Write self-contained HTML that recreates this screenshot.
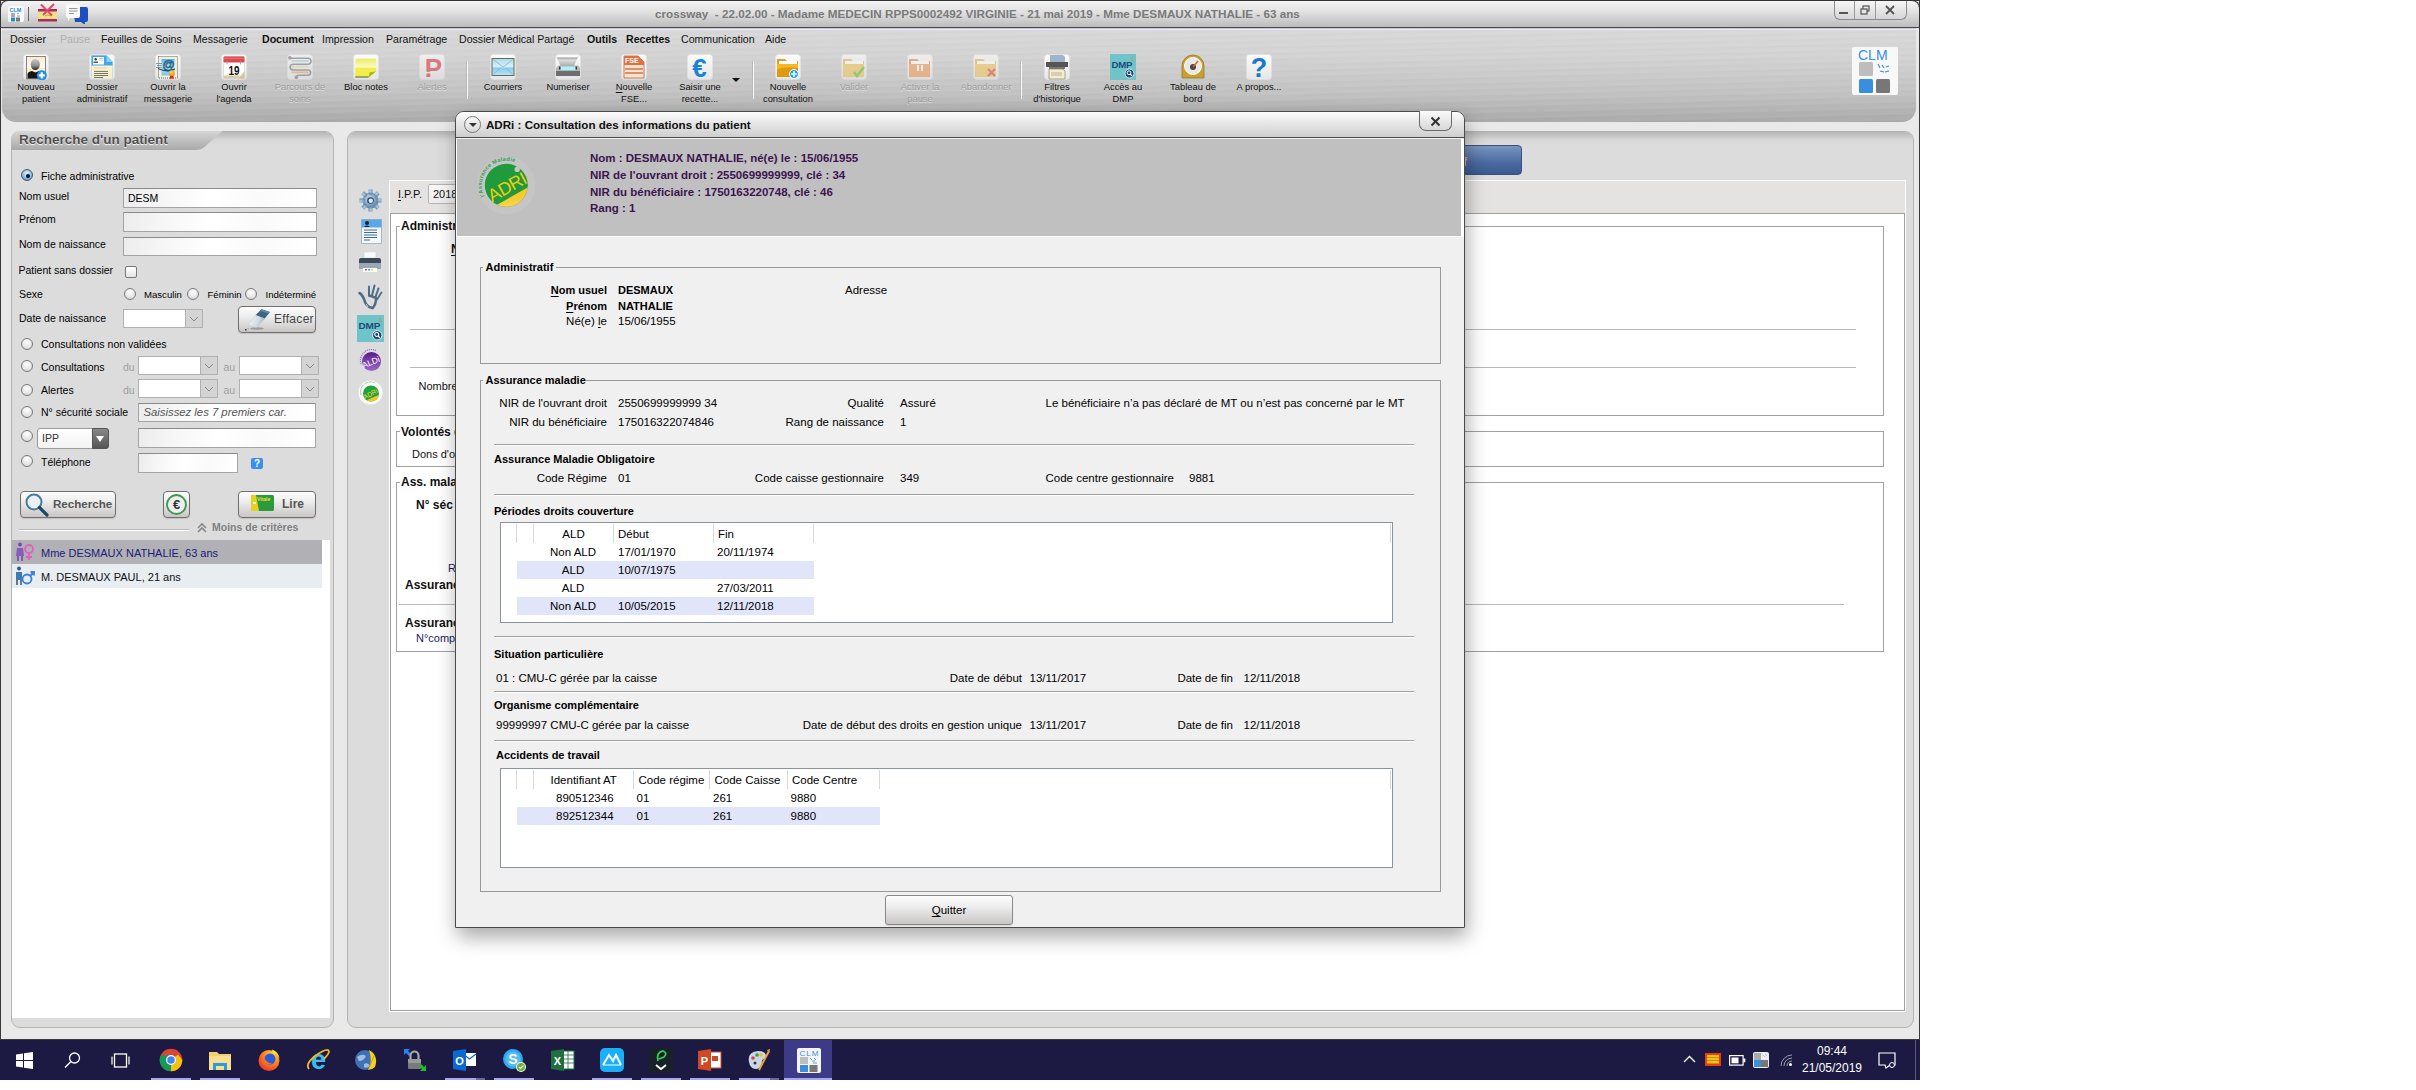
<!DOCTYPE html>
<html><head><meta charset="utf-8">
<style>
*{margin:0;padding:0;box-sizing:border-box}
html,body{width:2416px;height:1090px;overflow:hidden;background:#fff;font-family:"Liberation Sans",sans-serif;font-size:11px;color:#000}
.a{position:absolute}
u{text-underline-offset:2px;text-decoration-thickness:1px}
.t{position:absolute;white-space:nowrap;line-height:1}
#win{left:0;top:0;width:1920px;height:1040px;background:#e9e9e9;border-left:1px solid #3a3a3a;border-right:1px solid #3a3a3a;border-top:1px solid #333}
#title{left:0;top:0;width:1920px;height:28px;background:linear-gradient(#f4f4f4,#e2e2e2 40%,#bdbdbd);border-bottom:1px solid #404040;border-radius:8px 8px 0 0;border:1px solid #333;border-bottom:1px solid #484848}
#tb{left:2px;top:29px;width:1914px;height:93px;border-radius:0 0 14px 14px;
 background:repeating-linear-gradient(178.5deg,rgba(255,255,255,0.0) 0px,rgba(255,255,255,0.04) 2px,rgba(0,0,0,0.015) 4px,rgba(255,255,255,0) 6px),linear-gradient(#d9d9d9,#d3d3d3 30%,#c2c2c2 70%,#aaaaaa)}
.menu{top:34px;font-size:10.6px;color:#111}
.tbl{font-size:9.4px;color:#111;text-align:center;line-height:12px}
.dis{color:#9c9c9c;text-shadow:0 1px 0 rgba(255,255,255,0.5)}
.icd{opacity:0.68}
.panel{background:#dcdcdc;border:1px solid #b4b4b4;border-radius:9px 9px 9px 9px}
.rad{width:12px;height:12px;border-radius:50%;border:1px solid #7a7a7a;background:radial-gradient(circle at 50% 30%,#fff,#e0e0e0 70%,#c8c8c8)}
.rsel{background:radial-gradient(circle at 50% 35%,#e8f4ff,#7ab8f0 60%,#3a78c0);border-color:#555}
.inp{border:1px solid #a4a4a4;border-top-color:#8a8a8a;border-radius:1px;background:linear-gradient(100deg,#ececec 0%,#f6f6f6 20%,#fff 45%,#fafafa 70%,#fff 100%)}
.combo{border:1px solid #b0b0b0;background:#fff}
.cbtn{border:1px solid #b0b0b0;background:#d4d4d4}
.btn{border:1px solid #726e6e;border-radius:4px;background:linear-gradient(#fdfdfd,#ececec 40%,#c9c5c5);box-shadow:0 1px 1px rgba(0,0,0,0.12)}
#taskbar{left:0;top:1039px;width:1920px;height:41px;background:#1c1a42;border-top:1px solid #3a3a3a}
</style></head><body>
<svg width="0" height="0" style="position:absolute"><defs><linearGradient id="tile" x1="0" y1="0" x2="0" y2="1"><stop offset="0" stop-color="#fbfbfb"/><stop offset="1" stop-color="#e6e6e6"/></linearGradient></defs></svg>
<div id="win" class="a"></div>
<div id="title" class="a"></div>
<div class="t" style="left:655px;top:8px;font-size:11.7px;font-weight:bold;color:#7a7a7a">crossway&nbsp; - 22.02.00 - Madame MEDECIN RPPS0002492 VIRGINIE - 21 mai 2019 - Mme DESMAUX NATHALIE - 63 ans</div>
<div class="a" style="left:8px;top:6px;width:16px;height:16px;background:#f8f8f8;border-radius:2px"><svg width="16" height="16" viewBox="0 0 16 16"><text x="1.5" y="6" font-size="5.5" font-weight="bold" fill="#2a88d8" font-family="Liberation Sans">CLM</text><rect x="3" y="7" width="4" height="4" fill="#aaa"/><rect x="3" y="11.5" width="4" height="4" fill="#2a88d8"/><rect x="8" y="11.5" width="4" height="4" fill="#777"/><path d="M9 8l2 -1M9 10h3" stroke="#2a88d8" stroke-width="0.7"/></svg></div>
<div class="a" style="left:28px;top:7px;width:1px;height:14px;background:#666"></div>
<svg class="a" style="left:37px;top:3px" width="22" height="20" viewBox="0 0 22 20"><rect x="1" y="6" width="19" height="12" rx="1.5" fill="#f0e08a"/><rect x="1" y="6" width="19" height="2.5" fill="#b02858"/><rect x="1" y="16" width="19" height="2.5" fill="#b02858"/><path d="M8 13q3-2 6 0" stroke="#c8a840" stroke-width="1" fill="none"/><path d="M4 1.5l11 11M17 1l-11 11" stroke="#e04870" stroke-width="2"/></svg>
<svg class="a" style="left:65px;top:4px" width="24" height="20" viewBox="0 0 24 20"><path d="M8 3h13a2 2 0 0 1 2 2v11a2 2 0 0 1-2 2h-1v3l-4-3H10z" fill="#1e4ec0"/><path d="M1 2a2 2 0 0 1 2-2h10a2 2 0 0 1 2 2v10a2 2 0 0 1-2 2H5l-2 3v-3H3a2 2 0 0 1-2-2z" fill="#fafafa"/><path d="M4 4.5h8.5M4 7h8.5M4 9.5h5" stroke="#666" stroke-width="0.7"/></svg>
<div id="tb" class="a"></div>
<div class="a" style="left:1834px;top:1px;width:73px;height:19px;border:1px solid #8a8a8a;border-top:none;border-radius:0 0 6px 6px;background:linear-gradient(#f6f6f6,#d6d6d6)"></div>
<div class="a" style="left:1854px;top:1px;width:1px;height:18px;background:#9a9a9a"></div>
<div class="a" style="left:1875px;top:1px;width:1px;height:18px;background:#9a9a9a"></div>
<div class="a" style="left:1839px;top:12px;width:9px;height:2px;background:#555"></div>
<svg class="a" style="left:1860px;top:5px" width="10" height="10" viewBox="0 0 10 10"><rect x="3" y="1" width="6" height="5" fill="none" stroke="#555" stroke-width="1.2"/><rect x="1" y="4" width="6" height="5" fill="#e6e6e6" stroke="#555" stroke-width="1.2"/></svg>
<svg class="a" style="left:1885px;top:5px" width="10" height="10" viewBox="0 0 10 10"><path d="M1 1l8 8M9 1l-8 8" stroke="#555" stroke-width="1.8"/></svg>
<div class="a" style="left:1852px;top:47px;width:46px;height:48px;background:#f8f8f8;border-radius:2px"><svg width="46" height="48" viewBox="0 0 46 48"><text x="6" y="13" font-size="14" fill="#3a8ee0" font-family="Liberation Sans">CLM</text><rect x="7" y="15" width="14" height="14" rx="1.5" fill="#bdbdbd"/><rect x="7" y="32" width="14" height="14" rx="1.5" fill="#3a8ee0"/><rect x="24" y="32" width="14" height="14" rx="1.5" fill="#777"/><path d="M26 17l2 4M30 18l2 3M34 20l3 -1M28 24l4 1M33 25l4 -1" stroke="#3a8ee0" stroke-width="1.2"/></svg></div>
<div class="a" style="left:2px;top:28px;width:1914px;height:1px;background:#c6c6de"></div>
<div class="a" style="left:2px;top:29px;width:1914px;height:1px;background:#eaeaf0"></div>
<!--MENU-->
<div class="t menu" style="left:10px;">Dossier</div>
<div class="t menu" style="left:60px;color:#b0b0b0;">Pause</div>
<div class="t menu" style="left:101px;">Feuilles de Soins</div>
<div class="t menu" style="left:193px;">Messagerie</div>
<div class="t menu" style="left:262px;font-weight:bold;">Document</div>
<div class="t menu" style="left:322px;">Impression</div>
<div class="t menu" style="left:386px;">Paramétrage</div>
<div class="t menu" style="left:459px;">Dossier Médical Partagé</div>
<div class="t menu" style="left:587px;font-weight:bold;">Outils</div>
<div class="t menu" style="left:626px;font-weight:bold;">Recettes</div>
<div class="t menu" style="left:681px;">Communication</div>
<div class="t menu" style="left:765px;">Aide</div>
<!--TOOLBAR-->
<div class="a ico " style="left:23px;top:54px"><svg width="26" height="26" viewBox="0 0 26 26"><rect x="0.5" y="0.5" width="25" height="25" rx="3" fill="url(#tile)" stroke="#e0e0e0" stroke-width="0.6"/><defs><linearGradient id="npf" x1="0" y1="0" x2="0" y2="1"><stop offset="0" stop-color="#f8ecd0"/><stop offset="0.5" stop-color="#fffaf0"/><stop offset="0.5" stop-color="#f8ecc8"/><stop offset="1" stop-color="#f8f0d8"/></linearGradient><linearGradient id="nph" x1="0" y1="0" x2="0" y2="1"><stop offset="0" stop-color="#c8c8c8"/><stop offset="0.6" stop-color="#909090"/><stop offset="1" stop-color="#222"/></linearGradient></defs><rect x="3.4" y="2.4" width="19" height="22.5" fill="url(#npf)" stroke="#6a6a6a" stroke-width="0.8"/><ellipse cx="12.3" cy="10.5" rx="4.6" ry="5.6" fill="url(#nph)"/><path d="M4.5 24.5V20Q5 17.5 9 17L12.3 18.5L16 17Q19 18 19 21V24.5Z" fill="#151515"/><circle cx="18.8" cy="21.3" r="5" fill="#1a8ef0"/><path d="M18.8 18.2v6.2M15.7 21.3h6.2" stroke="#fff" stroke-width="2.2"/></svg></div>
<div class="a tbl" style="left:-4px;top:81px;width:80px">Nouveau<br>patient</div>
<div class="a ico " style="left:89px;top:54px"><svg width="26" height="26" viewBox="0 0 26 26"><rect x="0.5" y="0.5" width="25" height="25" rx="3" fill="url(#tile)" stroke="#e0e0e0" stroke-width="0.6"/><path d="M2.5 1.5h15l6 6.5v17h-21z" fill="#fbf0cc" stroke="#bcd" stroke-width="0.6"/><path d="M2.5 1.5h15l6 6.5v3.5h-21z" fill="#3aa8ec"/><path d="M17.5 1.5l6 6.5h-6z" fill="#8fd0f4"/><rect x="4" y="3" width="11" height="7.5" fill="#fff"/><circle cx="6.7" cy="5.3" r="1.2" fill="#333"/><rect x="4.5" y="7.5" width="4.5" height="1.5" fill="#555"/><path d="M10 4.5h4M10 6h4" stroke="#888" stroke-width="0.5"/><path d="M5 14h13" stroke="#bbb" stroke-width="0.5"/><path d="M5 17.4h14M5 19.5h14M5 21.5h14M5 23.5h9" stroke="#3a3a3a" stroke-width="0.7"/></svg></div>
<div class="a tbl" style="left:62px;top:81px;width:80px">Dossier<br>administratif</div>
<div class="a ico " style="left:155px;top:54px"><svg width="26" height="26" viewBox="0 0 26 26"><rect x="0.5" y="0.5" width="25" height="25" rx="3" fill="url(#tile)" stroke="#e0e0e0" stroke-width="0.6"/><defs><linearGradient id="omg" x1="0" y1="0" x2="0" y2="1"><stop offset="0" stop-color="#48b8f0"/><stop offset="0.45" stop-color="#b8e8fa"/><stop offset="0.55" stop-color="#98d8f4"/><stop offset="1" stop-color="#78c8f0"/></linearGradient><radialGradient id="medg" cx="0.4" cy="0.3" r="0.7"><stop offset="0" stop-color="#ffd060"/><stop offset="1" stop-color="#f09010"/></radialGradient></defs><rect x="3.5" y="2.5" width="19" height="21.5" fill="#f6eed4" stroke="#555" stroke-width="0.9" stroke-dasharray="1 1"/><rect x="6.5" y="5" width="13" height="16.5" fill="url(#omg)"/><text x="13.5" y="14.5" font-size="12" fill="none" stroke="#2a5a80" stroke-width="0.7" text-anchor="middle" font-family="Liberation Sans">@</text><path d="M1 9.5h6M2 11.5h5M1 13.5h6" stroke="#5a8aaa" stroke-width="0.8"/><path d="M3 14.5 Q12 19 20 15" stroke="#1a4a6a" stroke-width="1.3" fill="none"/><path d="M15 20.5h3.5v5l-1.75-1.5-1.75 1.5z" fill="#e82020"/><circle cx="16.8" cy="19.2" r="2.9" fill="url(#medg)"/></svg></div>
<div class="a tbl" style="left:128px;top:81px;width:80px">Ouvrir la<br>messagerie</div>
<div class="a ico " style="left:221px;top:54px"><svg width="26" height="26" viewBox="0 0 26 26"><rect x="0.5" y="0.5" width="25" height="25" rx="3" fill="url(#tile)" stroke="#e0e0e0" stroke-width="0.6"/><defs><linearGradient id="agr" x1="0" y1="0" x2="0" y2="1"><stop offset="0" stop-color="#c83848"/><stop offset="0.3" stop-color="#f07060"/><stop offset="0.5" stop-color="#e04a50"/><stop offset="1" stop-color="#d84450"/></linearGradient></defs><rect x="2.5" y="2.5" width="21" height="22" rx="1.2" fill="#fff" stroke="#c8c8c8" stroke-width="0.5"/><path d="M2.5 21.5h21v1.8a1.2 1.2 0 0 1-1.2 1.2H3.7a1.2 1.2 0 0 1-1.2-1.2z" fill="#d8cca0"/><rect x="2.5" y="2.5" width="21" height="6" rx="1" fill="url(#agr)"/><path d="M6 6.5v4M19.5 6.5v4" stroke="#999" stroke-width="0.8"/><text x="13" y="20.5" font-size="12.5" font-weight="bold" text-anchor="middle" fill="#111" font-family="Liberation Sans" textLength="11" lengthAdjust="spacingAndGlyphs">19</text><path d="M16.5 24.5 L23.5 17 V24.5Z" fill="#d0c498"/><path d="M16.5 24.5 Q19 20 23.5 17 Q21 22 16.5 24.5z" fill="#f4f0e4"/></svg></div>
<div class="a tbl" style="left:194px;top:81px;width:80px">Ouvrir<br>l'agenda</div>
<div class="a ico icd" style="left:287px;top:54px"><svg width="26" height="26" viewBox="0 0 26 26"><rect x="0.5" y="0.5" width="25" height="25" rx="3" fill="url(#tile)" stroke="#e0e0e0" stroke-width="0.6"/><rect x="4.5" y="6" width="17" height="1.8" fill="#b4d6ea"/><rect x="4.5" y="11.8" width="17" height="1.8" fill="#dfe4b0"/><rect x="4.5" y="17.4" width="17" height="1.8" fill="#f0b070"/><path d="M3 4.2H21A3 3 0 0 1 21 10.2H6A2.9 2.9 0 0 0 6 16H21A2.6 2.6 0 0 1 21 21.2H11.5A2 2 0 0 0 9.5 23.2" fill="none" stroke="#858b94" stroke-width="1.6"/><circle cx="2.9" cy="3.9" r="1.8" fill="#858b94"/><circle cx="9.3" cy="23.4" r="1.8" fill="#858b94"/></svg></div>
<div class="a tbl dis" style="left:260px;top:81px;width:80px">Parcours de<br>soins</div>
<div class="a ico " style="left:353px;top:54px"><svg width="26" height="26" viewBox="0 0 26 26"><rect x="0.5" y="0.5" width="25" height="25" rx="3" fill="url(#tile)" stroke="#e0e0e0" stroke-width="0.6"/><defs><linearGradient id="bng" x1="0" y1="0" x2="0" y2="1"><stop offset="0" stop-color="#ecec60"/><stop offset="0.45" stop-color="#fbfbc8"/><stop offset="0.5" stop-color="#f0ec50"/><stop offset="1" stop-color="#f4f040"/></linearGradient></defs><path d="M2.6 4.8H23V17.6L15.6 23.4H2.2Z" fill="url(#bng)"/><path d="M2.2 23.4H15.6L15.8 22.6H2.4Z" fill="#4a5a70"/><path d="M23 17.6L15.6 23.4L16.6 18.2Z" fill="#a8b818"/></svg></div>
<div class="a tbl" style="left:326px;top:81px;width:80px">Bloc notes</div>
<div class="a ico icd" style="left:419px;top:54px"><svg width="26" height="26" viewBox="0 0 26 26"><rect x="0.5" y="0.5" width="25" height="25" rx="3" fill="url(#tile)" stroke="#e0e0e0" stroke-width="0.6"/><text x="14.5" y="22.8" font-size="26" font-weight="bold" text-anchor="middle" fill="#e05058" font-family="Liberation Sans">P</text><rect x="7" y="17.8" width="6" height="1.6" fill="#f2f2f2"/></svg></div>
<div class="a tbl dis" style="left:392px;top:81px;width:80px">Alertes</div>
<div class="a ico " style="left:490px;top:54px"><svg width="26" height="26" viewBox="0 0 26 26"><rect x="0.5" y="0.5" width="25" height="25" rx="3" fill="url(#tile)" stroke="#e0e0e0" stroke-width="0.6"/><defs><linearGradient id="envg" x1="0" y1="0" x2="0" y2="1"><stop offset="0" stop-color="#a8dcf4"/><stop offset="0.5" stop-color="#d8f0fa"/><stop offset="0.55" stop-color="#88ccee"/><stop offset="1" stop-color="#b8e4f8"/></linearGradient></defs><rect x="2" y="4.5" width="22" height="17" fill="url(#envg)" stroke="#6a6a50" stroke-width="1"/><path d="M2.5 5l10.5 8 10.5-8" fill="none" stroke="#8aa0a0" stroke-width="0.6"/><path d="M2.5 21l8-7M23.5 21l-8-7" stroke="#7aa8c0" stroke-width="0.6"/></svg></div>
<div class="a tbl" style="left:463px;top:81px;width:80px">Courriers</div>
<div class="a ico " style="left:555px;top:54px"><svg width="26" height="26" viewBox="0 0 26 26"><rect x="0.5" y="0.5" width="25" height="25" rx="3" fill="url(#tile)" stroke="#e0e0e0" stroke-width="0.6"/><defs><linearGradient id="scl" x1="0" y1="0" x2="0" y2="1"><stop offset="0" stop-color="#999"/><stop offset="0.3" stop-color="#ddd"/><stop offset="1" stop-color="#aaa"/></linearGradient></defs><path d="M1.5 3.5h21.5l-1 1.5-3 7H5.5l-3-7z" fill="url(#scl)"/><path d="M1 14l2.5-2.5h19.5l2 2.5v3H1z" fill="#b4b4b4"/><path d="M4.5 12.5h17l-1 3.5h-15z" fill="#aef0fc"/><rect x="4" y="12.5" width="1.5" height="3" fill="#333"/><rect x="20.5" y="12.5" width="1.5" height="3" fill="#333"/><rect x="1" y="17" width="24" height="5" fill="#6e6e6e"/></svg></div>
<div class="a tbl" style="left:528px;top:81px;width:80px">Numeriser</div>
<div class="a ico " style="left:621px;top:54px"><svg width="26" height="26" viewBox="0 0 26 26"><rect x="0.5" y="0.5" width="25" height="25" rx="3" fill="url(#tile)" stroke="#e0e0e0" stroke-width="0.6"/><path d="M3 2h14l6 6v16H3z" fill="#f8e4d4" stroke="#c06030" stroke-width="0.8"/><path d="M3 2h14l6 6v3H3z" fill="#e07040"/><text x="4" y="9" font-size="7" font-weight="bold" fill="#fff" font-family="Liberation Sans">FSE</text><path d="M4 15h18M4 19h18" stroke="#e07040" stroke-width="1.6"/></svg></div>
<div class="a tbl" style="left:594px;top:81px;width:80px"><u>N</u>ouvelle<br>FSE...</div>
<div class="a ico " style="left:687px;top:54px"><svg width="26" height="26" viewBox="0 0 26 26"><rect x="0.5" y="0.5" width="25" height="25" rx="3" fill="url(#tile)" stroke="#e0e0e0" stroke-width="0.6"/><text x="12.5" y="22.5" font-size="26" font-weight="bold" text-anchor="middle" fill="#1a84d4" font-family="Liberation Sans">€</text></svg></div>
<div class="a tbl" style="left:660px;top:81px;width:80px">Saisir une<br>recette...</div>
<div class="a ico " style="left:775px;top:54px"><svg width="26" height="26" viewBox="0 0 26 26"><rect x="0.5" y="0.5" width="25" height="25" rx="3" fill="url(#tile)" stroke="#e0e0e0" stroke-width="0.6"/><path d="M2 5h8l2 2h11v16H2z" fill="#e0a020"/><rect x="4" y="7" width="18" height="5" fill="#fff"/><path d="M2 10h21v13H2z" fill="#f4b820"/><path d="M2 15 Q12 12 23 14 V23H2z" fill="#e09a10"/><circle cx="19" cy="20" r="4.5" fill="#20a8f0" stroke="#fff" stroke-width="1"/><path d="M19 17.2v5.6M16.2 20h5.6" stroke="#fff" stroke-width="1.6"/></svg></div>
<div class="a tbl" style="left:748px;top:81px;width:80px">Nouvelle<br>consultation</div>
<div class="a ico icd" style="left:841px;top:54px"><svg width="26" height="26" viewBox="0 0 26 26"><rect x="0.5" y="0.5" width="25" height="25" rx="3" fill="url(#tile)" stroke="#e0e0e0" stroke-width="0.6"/><path d="M2 5h8l2 2h11v16H2z" fill="#e8c070"/><rect x="4" y="7" width="18" height="5" fill="#fff"/><path d="M2 10h21v13H2z" fill="#f0cc70"/><path d="M13 18l3 4 7-9" stroke="#70c850" stroke-width="2.5" fill="none"/></svg></div>
<div class="a tbl dis" style="left:814px;top:81px;width:80px">Valider</div>
<div class="a ico icd" style="left:907px;top:54px"><svg width="26" height="26" viewBox="0 0 26 26"><rect x="0.5" y="0.5" width="25" height="25" rx="3" fill="url(#tile)" stroke="#e0e0e0" stroke-width="0.6"/><path d="M2 5h8l2 2h11v16H2z" fill="#e89860"/><rect x="4" y="7" width="18" height="5" fill="#fff"/><path d="M2 10h21v13H2z" fill="#f0a870"/><rect x="10" y="11" width="2" height="6" fill="#fff"/><rect x="14" y="11" width="2" height="6" fill="#fff"/></svg></div>
<div class="a tbl dis" style="left:880px;top:81px;width:80px">Activer la<br>pause</div>
<div class="a ico icd" style="left:973px;top:54px"><svg width="26" height="26" viewBox="0 0 26 26"><rect x="0.5" y="0.5" width="25" height="25" rx="3" fill="url(#tile)" stroke="#e0e0e0" stroke-width="0.6"/><path d="M2 5h8l2 2h11v16H2z" fill="#e8c070"/><rect x="4" y="7" width="18" height="5" fill="#fff"/><path d="M2 10h21v13H2z" fill="#f0cc70"/><path d="M15 15l7 7M22 15l-7 7" stroke="#e06060" stroke-width="2.2"/></svg></div>
<div class="a tbl dis" style="left:946px;top:81px;width:80px">Abandonner</div>
<div class="a ico " style="left:1044px;top:54px"><svg width="26" height="26" viewBox="0 0 26 26"><rect x="0.5" y="0.5" width="25" height="25" rx="3" fill="url(#tile)" stroke="#e0e0e0" stroke-width="0.6"/><path d="M6 1h13l2 2v5H6z" fill="#a0b4cc"/><path d="M2 8h22v5H2z" fill="#555"/><rect x="5" y="13" width="16" height="2" fill="#777"/><path d="M5 15h14l2 2v8H5z" fill="#f6ecc8" stroke="#777" stroke-width="0.6"/><path d="M7 19h11M7 21h11" stroke="#999" stroke-width="0.7"/></svg></div>
<div class="a tbl" style="left:1017px;top:81px;width:80px">Filtres<br>d'historique</div>
<div class="a ico " style="left:1110px;top:54px"><svg width="26" height="26" viewBox="0 0 26 26"><rect x="0" y="0" width="26" height="26" fill="#6ec4c8"/><text x="1.5" y="13.5" font-size="9.6" font-weight="bold" fill="#1e4a7a" font-family="Liberation Sans" textLength="21">DMP</text><path d="M21 5l2 -2M21 6h3" stroke="#e08030" stroke-width="0.8"/><circle cx="19.5" cy="19.5" r="4.5" fill="#1e4a7a" stroke="#fff" stroke-width="0.8"/><circle cx="19" cy="18.8" r="1.9" fill="none" stroke="#fff" stroke-width="1"/><path d="M20.3 20.2l1.8 1.8" stroke="#fff" stroke-width="1.2"/></svg></div>
<div class="a tbl" style="left:1083px;top:81px;width:80px">Accès au<br>DMP</div>
<div class="a ico " style="left:1180px;top:54px"><svg width="26" height="26" viewBox="0 0 26 26"><path d="M2 24 V12 A11 11 0 0 1 24 12 V24Z" fill="#c8a030" stroke="#9a7a20" stroke-width="0.8"/><circle cx="13" cy="12" r="8.5" fill="#e8e8e8" stroke="#fff" stroke-width="1"/><circle cx="13" cy="13" r="3" fill="#444"/><path d="M13 13l5-6" stroke="#e06020" stroke-width="1.5"/></svg></div>
<div class="a tbl" style="left:1153px;top:81px;width:80px">Tableau de<br>bord</div>
<div class="a ico " style="left:1246px;top:54px"><svg width="26" height="26" viewBox="0 0 26 26"><rect x="0.5" y="0.5" width="25" height="25" rx="3" fill="url(#tile)" stroke="#e0e0e0" stroke-width="0.6"/><text x="13" y="23" font-size="27" font-weight="bold" text-anchor="middle" fill="#1a78c8" font-family="Liberation Sans">?</text></svg></div>
<div class="a tbl" style="left:1219px;top:81px;width:80px">A propos...</div>
<div class="a" style="left:466px;top:61px;width:2px;height:38px;background:linear-gradient(90deg,#b8b8b8 50%,#fafafa 50%)"></div>
<div class="a" style="left:752px;top:61px;width:2px;height:38px;background:linear-gradient(90deg,#b8b8b8 50%,#fafafa 50%)"></div>
<div class="a" style="left:1020px;top:61px;width:2px;height:38px;background:linear-gradient(90deg,#b8b8b8 50%,#fafafa 50%)"></div>
<div class="a" style="left:732px;top:78px;width:0;height:0;border-left:4px solid transparent;border-right:4px solid transparent;border-top:4px solid #111"></div>
<!--/TOOLBAR-->

<!-- panels -->
<div class="a panel" style="left:11px;top:131px;width:323px;height:897px"></div>
<!--LEFT-->
<div class="a" style="left:12px;top:132px;width:321px;height:12px;border-radius:8px 8px 0 0;background:linear-gradient(#b6b6b6,#d4d4d4 60%,#dcdcdc)"></div>
<svg class="a" style="left:11px;top:131px" width="220" height="20" viewBox="0 0 220 20"><defs><linearGradient id="hg" x1="0" y1="0" x2="0" y2="1"><stop offset="0" stop-color="#d6d6d6"/><stop offset="1" stop-color="#a9a9a9"/></linearGradient></defs><path d="M0 9 Q0 0 9 0 H211.5 L194 15.5 Q190 19 185 19 H0Z" fill="url(#hg)"/></svg>
<div class="t" style="left:19px;top:133px;font-size:13.5px;font-weight:bold;color:#505050;text-shadow:0 1px 1px #fff">Recherche d'un patient</div>
<div class="a rad rsel" style="left:21px;top:169px"><div class="a" style="left:3.5px;top:3.5px;width:4px;height:4px;border-radius:50%;background:#111"></div></div>
<div class="t" style="left:41px;top:171px;font-size:10.5px;">Fiche administrative</div>
<div class="t" style="left:19px;top:191px;font-size:10.5px;">Nom usuel</div>
<div class="a inp" style="left:123px;top:188px;width:194px;height:20px"></div>
<div class="t" style="left:128px;top:193px;font-size:10.5px;">DESM</div>
<div class="t" style="left:19px;top:214px;font-size:10.5px;">Prénom</div>
<div class="a inp" style="left:123px;top:212px;width:194px;height:20px"></div>
<div class="t" style="left:19px;top:239px;font-size:10.5px;">Nom de naissance</div>
<div class="a inp" style="left:123px;top:237px;width:194px;height:19px"></div>
<div class="t" style="left:18.5px;top:265px;font-size:10.5px;">Patient sans dossier</div>
<div class="a" style="left:125px;top:266px;width:12px;height:12px;border:1px solid #777;border-radius:2px;background:linear-gradient(#fff,#e4e4e4)"></div>
<div class="t" style="left:19px;top:289px;font-size:10.5px;">Sexe</div>
<div class="a rad" style="left:124px;top:288px"></div>
<div class="t" style="left:144px;top:290px;font-size:9.6px;">Masculin</div>
<div class="a rad" style="left:187px;top:288px"></div>
<div class="t" style="left:207.5px;top:290px;font-size:9.6px;">Féminin</div>
<div class="a rad" style="left:245px;top:288px"></div>
<div class="t" style="left:265.5px;top:290px;font-size:9.6px;">Indéterminé</div>
<div class="t" style="left:19px;top:313px;font-size:10.5px;">Date de naissance</div>
<div class="a combo" style="left:123px;top:309px;width:80px;height:19px"></div><div class="a cbtn" style="left:185px;top:309px;width:18px;height:19px"></div><svg class="a" style="left:189.0px;top:315.5px" width="10" height="6" viewBox="0 0 10 6"><path d="M1 1l4 4 4-4" stroke="#888" stroke-width="1" fill="none"/></svg>
<div class="a btn" style="left:238px;top:306px;width:78px;height:27px"></div>
<svg class="a" style="left:245px;top:308px" width="28" height="24" viewBox="0 0 28 24"><defs><linearGradient id="erg" x1="0" y1="0" x2="1" y2="0.3"><stop offset="0" stop-color="#f4f8fa"/><stop offset="0.7" stop-color="#d0dce4"/><stop offset="1" stop-color="#a8b4bc"/></linearGradient></defs><ellipse cx="12" cy="20.5" rx="7" ry="1.2" fill="#777" opacity="0.6"/><path d="M3.2 16.8 L10.7 6.9 L19.8 10.6 L11.5 19.7Z" fill="url(#erg)" stroke="#c0c8cc" stroke-width="0.4" stroke-linejoin="round"/><path d="M10.7 6.9 L16.5 1.3 L25 4 L19.8 10.6Z" fill="#3c6688" stroke-linejoin="round"/><path d="M16.5 1.3 L25 4 L23.5 5.6 L15 3Z" fill="#5a8ab0"/><rect x="0" y="21" width="1.5" height="1.5" fill="#333"/><rect x="2.5" y="20" width="1.2" height="1.2" fill="#9ab"/></svg>
<div class="t" style="left:274px;top:313px;font-size:12px;color:#444;letter-spacing:0.3px">Effacer</div>
<div class="a rad" style="left:21px;top:337.5px"></div>
<div class="t" style="left:41px;top:339px;font-size:10.5px;">Consultations non validées</div>
<div class="a rad" style="left:21px;top:360px"></div>
<div class="t" style="left:41px;top:362px;font-size:10.5px;">Consultations</div>
<div class="t" style="left:123px;top:362px;font-size:10.5px;color:#a0a0a0">du</div>
<div class="a combo" style="left:138px;top:356px;width:80px;height:19px"></div><div class="a cbtn" style="left:200px;top:356px;width:18px;height:19px"></div><svg class="a" style="left:204.0px;top:362.5px" width="10" height="6" viewBox="0 0 10 6"><path d="M1 1l4 4 4-4" stroke="#888" stroke-width="1" fill="none"/></svg>
<div class="t" style="left:223.5px;top:362px;font-size:10.5px;color:#a0a0a0">au</div>
<div class="a combo" style="left:239px;top:356px;width:80px;height:19px"></div><div class="a cbtn" style="left:301px;top:356px;width:18px;height:19px"></div><svg class="a" style="left:305.0px;top:362.5px" width="10" height="6" viewBox="0 0 10 6"><path d="M1 1l4 4 4-4" stroke="#888" stroke-width="1" fill="none"/></svg>
<div class="a rad" style="left:21px;top:383.5px"></div>
<div class="t" style="left:41px;top:385px;font-size:10.5px;">Alertes</div>
<div class="t" style="left:123px;top:385px;font-size:10.5px;color:#a0a0a0">du</div>
<div class="a combo" style="left:138px;top:379px;width:80px;height:19px"></div><div class="a cbtn" style="left:200px;top:379px;width:18px;height:19px"></div><svg class="a" style="left:204.0px;top:385.5px" width="10" height="6" viewBox="0 0 10 6"><path d="M1 1l4 4 4-4" stroke="#888" stroke-width="1" fill="none"/></svg>
<div class="t" style="left:223.5px;top:385px;font-size:10.5px;color:#a0a0a0">au</div>
<div class="a combo" style="left:239px;top:379px;width:80px;height:19px"></div><div class="a cbtn" style="left:301px;top:379px;width:18px;height:19px"></div><svg class="a" style="left:305.0px;top:385.5px" width="10" height="6" viewBox="0 0 10 6"><path d="M1 1l4 4 4-4" stroke="#888" stroke-width="1" fill="none"/></svg>
<div class="a rad" style="left:21px;top:405.5px"></div>
<div class="t" style="left:41px;top:407px;font-size:10.5px;">N° sécurité sociale</div>
<div class="a inp" style="left:138px;top:403px;width:178px;height:19px"></div>
<div class="t" style="left:143.5px;top:407px;font-size:11.3px;font-style:italic;color:#555">Saisissez les 7 premiers car.</div>
<div class="a rad" style="left:21px;top:430px"></div>
<div class="a" style="left:37px;top:428px;width:72px;height:21px;border:1px solid #9a9a9a;border-radius:3px;background:linear-gradient(#fff,#f2f2f2)"></div>
<div class="a" style="left:92px;top:428px;width:17px;height:21px;border-radius:0 3px 3px 0;background:linear-gradient(#888,#555);border:1px solid #555"></div>
<div class="a" style="left:96px;top:436px;width:0;height:0;border-left:4.5px solid transparent;border-right:4.5px solid transparent;border-top:6px solid #fff"></div>
<div class="t" style="left:42px;top:433px;font-size:10.5px;color:#333">IPP</div>
<div class="a inp" style="left:138px;top:428px;width:178px;height:20px"></div>
<div class="a rad" style="left:21px;top:455px"></div>
<div class="t" style="left:41px;top:457px;font-size:10.5px;">Téléphone</div>
<div class="a inp" style="left:138px;top:453px;width:100px;height:20px"></div>
<div class="a" style="left:251px;top:458px;width:12px;height:11px;background:#3a90e8;border-radius:2px;color:#fff;font-size:10px;font-weight:bold;text-align:center;line-height:11px">?</div>
<div class="a btn" style="left:20px;top:491px;width:96px;height:27px"></div>
<svg class="a" style="left:24px;top:492px" width="26" height="25" viewBox="0 0 26 25"><circle cx="10" cy="10" r="7.5" fill="#e8f0f4" stroke="#4a7a9a" stroke-width="2"/><path d="M15.5 15.5 L23 23" stroke="#1e4a6a" stroke-width="3.2" stroke-linecap="round"/></svg>
<div class="t" style="left:53px;top:498px;font-size:11.6px;font-weight:bold;color:#555">Recherche</div>
<div class="a btn" style="left:163px;top:491px;width:27px;height:27px"></div>
<svg class="a" style="left:165px;top:493px" width="23" height="23" viewBox="0 0 23 23"><circle cx="11.5" cy="11.5" r="9.5" fill="#eee" stroke="#3a9a4a" stroke-width="1.8"/><text x="11.5" y="16" font-size="13" font-weight="bold" text-anchor="middle" fill="#333" font-family="Liberation Sans">€</text></svg>
<div class="a btn" style="left:238px;top:491px;width:78px;height:27px"></div>
<svg class="a" style="left:251px;top:495px" width="23" height="16" viewBox="0 0 23 16"><rect x="0" y="0" width="23" height="16" rx="1.5" fill="#2a9a3a"/><path d="M0 0h5l3 16H0z" fill="#e8d020"/><text x="6" y="5.5" font-size="5" font-weight="bold" fill="#f0e040" font-family="Liberation Sans">Vitale</text><rect x="2" y="7" width="3" height="2" fill="#eee"/></svg>
<div class="t" style="left:282px;top:498px;font-size:12px;font-weight:bold;color:#555">Lire</div>
<div class="a" style="left:19px;top:529px;width:170px;height:2px;background:linear-gradient(#b8b8b8 50%,#fff 50%)"></div>
<svg class="a" style="left:197px;top:522px" width="10" height="11" viewBox="0 0 10 11"><path d="M1 6l4-4 4 4M1 10l4-4 4 4" stroke="#888" stroke-width="1.6" fill="none"/></svg>
<div class="t" style="left:212px;top:522px;font-size:10.5px;font-weight:bold;color:#808080">Moins de critères</div>
<div class="a" style="left:12px;top:540px;width:318px;height:478px;background:#fff"></div>
<div class="a" style="left:12px;top:540px;width:310px;height:24px;background:#b1b1b5"></div>
<div class="a" style="left:12px;top:564px;width:310px;height:24px;background:#e7edf1"></div>
<svg class="a" style="left:15px;top:542px" width="20" height="20" viewBox="0 0 20 20"><circle cx="5" cy="2.5" r="2" fill="#7a4ab0"/><path d="M2 6h6l1 8H1z" fill="#8a5ac0"/><path d="M3 14v5M7 14v5" stroke="#6a3a9a" stroke-width="1.4"/><circle cx="14" cy="7" r="4" fill="none" stroke="#e060c0" stroke-width="1.8"/><path d="M14 11v7M11 15h6" stroke="#e060c0" stroke-width="1.8"/></svg>
<div class="t" style="left:41px;top:548px;font-size:11px;color:#1a1a7a">Mme DESMAUX NATHALIE, 63 ans</div>
<svg class="a" style="left:15px;top:566px" width="20" height="20" viewBox="0 0 20 20"><circle cx="4" cy="2.5" r="2" fill="#2a5a9a"/><path d="M1 6h6v8H1z" fill="#3a7ab0"/><path d="M2 14v5M6 14v5" stroke="#2a4a6a" stroke-width="1.4"/><circle cx="12" cy="13" r="4.5" fill="none" stroke="#3a80e0" stroke-width="1.8"/><path d="M15 10l4-4M15.5 6H19v3.5" stroke="#3a80e0" stroke-width="1.8" fill="none"/></svg>
<div class="t" style="left:41px;top:572px;font-size:11px;color:#111">M. DESMAUX PAUL, 21 ans</div>
<!--/LEFT-->
<div class="a panel" style="left:347px;top:131px;width:1567px;height:897px"></div>
<!--RIGHT-->
<div class="a" style="left:348px;top:132px;width:1565px;height:12px;border-radius:8px 8px 0 0;background:linear-gradient(#b6b6b6,#d4d4d4 60%,#dcdcdc)"></div>
<div class="a" style="left:1430px;top:145px;width:92px;height:30px;border-radius:4px;background:linear-gradient(#7a96c0,#4a6aa0 60%,#3a5a90);border:1px solid #3a5080"></div>
<div class="t" style="left:1463px;top:156px;font-size:12px;color:#c8b8a0;font-weight:bold">f</div>
<div class="a" style="left:389px;top:180px;width:1517px;height:832px;border:1px solid #fff;background:#fff"></div>
<div class="a" style="left:390px;top:181px;width:1515px;height:32px;background:#e4e3e1"></div>
<div class="a" style="left:390px;top:213px;width:1515px;height:798px;border:1px solid #a0a0a0;background:#fff"></div>
<div class="t" style="left:398px;top:189px;font-size:11px;color:#111"><u>I</u>.P.P.</div>
<div class="a" style="left:428px;top:184px;width:60px;height:20px;border:1px solid #b4b4b4;border-radius:2px;background:linear-gradient(#f8f8f8,#ececec)"></div>
<div class="t" style="left:433px;top:189px;font-size:11px;color:#111">2018</div>
<div class="a" style="left:396px;top:226px;width:1488px;height:190px;border:1px solid #a0a0a0"></div>
<div class="a" style="left:400px;top:220px;width:60px;height:14px;background:#fff"></div>
<div class="t" style="left:401px;top:220px;font-size:12px;font-weight:bold;color:#111">Administr</div>
<div class="a" style="left:410px;top:329px;width:1446px;height:1px;background:#b8b8b8"></div>
<div class="a" style="left:410px;top:367px;width:1446px;height:1px;background:#b8b8b8"></div>
<div class="t" style="left:418.5px;top:381px;font-size:11px;color:#111">Nombre</div>
<div class="t" style="left:451px;top:243px;font-size:12px;font-weight:bold;color:#111"><u>N</u></div>
<div class="a" style="left:396px;top:431px;width:1488px;height:36px;border:1px solid #a0a0a0"></div>
<div class="a" style="left:400px;top:425px;width:60px;height:14px;background:#fff"></div>
<div class="t" style="left:401px;top:426px;font-size:12px;font-weight:bold;color:#111">Volontés d</div>
<div class="t" style="left:412px;top:449px;font-size:11px;color:#111">Dons d'or</div>
<div class="a" style="left:396px;top:482px;width:1488px;height:170px;border:1px solid #a0a0a0"></div>
<div class="a" style="left:400px;top:476px;width:60px;height:14px;background:#fff"></div>
<div class="t" style="left:401px;top:476px;font-size:12px;font-weight:bold;color:#111">Ass. mala</div>
<div class="t" style="left:416px;top:499px;font-size:12px;font-weight:bold;color:#111">N° séc</div>
<div class="t" style="left:448px;top:563px;font-size:11px;color:#1a1a60">R</div>
<div class="t" style="left:405px;top:579px;font-size:12px;font-weight:bold;color:#111">Assuranc</div>
<div class="a" style="left:399px;top:604px;width:1445px;height:1px;background:#b8b8b8"></div>
<div class="t" style="left:405px;top:617px;font-size:12px;font-weight:bold;color:#111">Assuranc</div>
<div class="t" style="left:416px;top:633px;font-size:11px;color:#1a1a60">N°compl</div>
<svg class="a" style="left:359px;top:189px" width="23" height="23" viewBox="0 0 23 23"><defs><radialGradient id="gearg" cx="0.4" cy="0.35" r="0.7"><stop offset="0" stop-color="#b8d4ea"/><stop offset="1" stop-color="#5a80a4"/></radialGradient></defs><g fill="url(#gearg)"><circle cx="11.5" cy="11.5" r="8"/><rect x="9.5" y="0.5" width="4" height="5" transform="rotate(0 11.5 11.5)"/><rect x="9.5" y="0.5" width="4" height="5" transform="rotate(45 11.5 11.5)"/><rect x="9.5" y="0.5" width="4" height="5" transform="rotate(90 11.5 11.5)"/><rect x="9.5" y="0.5" width="4" height="5" transform="rotate(135 11.5 11.5)"/><rect x="9.5" y="0.5" width="4" height="5" transform="rotate(180 11.5 11.5)"/><rect x="9.5" y="0.5" width="4" height="5" transform="rotate(225 11.5 11.5)"/><rect x="9.5" y="0.5" width="4" height="5" transform="rotate(270 11.5 11.5)"/><rect x="9.5" y="0.5" width="4" height="5" transform="rotate(315 11.5 11.5)"/></g><circle cx="11.5" cy="11.5" r="3.3" fill="#2a4a6a"/><circle cx="11.8" cy="11.8" r="2.2" fill="#e0e8f0"/></svg>
<svg class="a" style="left:361px;top:219px" width="21" height="25" viewBox="0 0 21 25"><rect x="0.5" y="0.5" width="20" height="24" fill="#f4f8fc" stroke="#9ab" stroke-width="0.8"/><rect x="0.5" y="0.5" width="20" height="8" fill="#5aa8e8"/><circle cx="6" cy="4" r="2" fill="#222"/><path d="M3 8q3-3 6 0" fill="#222"/><path d="M3 11h13M3 13.5h13M3 16h13M3 18.5h13M3 21h6" stroke="#2a5a8a" stroke-width="0.9"/></svg>
<svg class="a" style="left:358px;top:252px" width="24" height="22" viewBox="0 0 24 22"><rect x="6" y="0" width="12" height="6" fill="#fafafa" stroke="#ccc" stroke-width="0.5"/><rect x="1" y="6" width="22" height="10" rx="2" fill="#3a4a5a"/><rect x="1" y="11" width="22" height="6" fill="#9aa8b4"/><rect x="5" y="16" width="14" height="4" fill="#fff"/><rect x="7" y="17" width="2" height="1.5" fill="#e040c0"/><rect x="10" y="17" width="2" height="1.5" fill="#20b0f0"/><rect x="13" y="17" width="2" height="1.5" fill="#f0d020"/></svg>
<svg class="a" style="left:355px;top:280px" width="30" height="32" viewBox="0 0 30 32"><g stroke="#4e6e86" stroke-linecap="round" fill="none"><path d="M4.5 13 Q8 15 10 22 Q12 27 17.5 28" stroke-width="2.6"/><path d="M14 6.5V15.5" stroke-width="2"/><path d="M19.5 5.5L17 15.5" stroke-width="2"/><path d="M23.5 8.5L20.5 17" stroke-width="2"/><path d="M26.5 12.5L22 19.5" stroke-width="1.8"/><path d="M14 15.5Q19 17 21 18Q21 25 17.5 28" stroke-width="2.4"/></g><path d="M15 18l4 4M13 22l3 4M11 24l2 3" stroke="#e8eef2" stroke-width="0.8"/></svg>
<svg class="a" style="left:357px;top:315px" width="27" height="27" viewBox="0 0 26 26"><rect x="0" y="0" width="26" height="26" fill="#6ec4c8"/><text x="1.5" y="13.5" font-size="9.6" font-weight="bold" fill="#1e4a7a" font-family="Liberation Sans" textLength="21">DMP</text><path d="M21 5l2 -2M21 6h3" stroke="#e08030" stroke-width="0.8"/><circle cx="19.5" cy="19.5" r="4.5" fill="#1e4a7a" stroke="#fff" stroke-width="0.8"/><circle cx="19" cy="18.8" r="1.9" fill="none" stroke="#fff" stroke-width="1"/><path d="M20.3 20.2l1.8 1.8" stroke="#fff" stroke-width="1.2"/></svg>
<svg class="a" style="left:358px;top:348px" width="25" height="25" viewBox="0 0 25 25"><defs><linearGradient id="aldg" x1="0" y1="0" x2="0" y2="1"><stop offset="0" stop-color="#5a1a8a"/><stop offset="1" stop-color="#9a6ac8"/></linearGradient></defs><circle cx="13.5" cy="13.5" r="9.5" fill="url(#aldg)"/><text x="0" y="0" font-size="8.5" fill="#fff" text-anchor="middle" font-family="Liberation Sans" transform="translate(14 17) rotate(-22)">ALDi</text><path d="M3 16 A11 11 0 0 1 18 2.5" stroke="#a070c8" stroke-width="1.2" fill="none" stroke-dasharray="1.2 0.8"/></svg>
<svg class="a" style="left:358px;top:380px" width="25" height="25" viewBox="0 0 25 25"><defs><clipPath id="acl"><circle cx="13" cy="13.5" r="8"/></clipPath></defs><circle cx="12.5" cy="12.5" r="12" fill="#fafafa"/><g clip-path="url(#acl)"><rect width="25" height="25" fill="#22a040"/><path d="M0 24 L25 13 V25 H0Z" fill="#f0c820"/></g><text x="0" y="0" font-size="6.5" fill="#f0e020" text-anchor="middle" font-family="Liberation Sans" transform="translate(13.5 16) rotate(-28)">ADRi</text><path d="M3 15 A10 10 0 0 1 17 3" stroke="#60b070" stroke-width="0.9" fill="none" stroke-dasharray="0.8 0.6"/></svg>
<!--/RIGHT-->

<!--DIALOG-->
<div class="a" style="left:455px;top:111px;width:1010px;height:817px;border:1px solid #4a4a4a;border-radius:9px 9px 0 0;background:#f0f0f0;box-shadow:2px 9px 20px rgba(0,0,0,0.34)"></div>
<div class="a" style="left:456px;top:112px;width:1008px;height:26px;border-radius:8px 8px 0 0;background:linear-gradient(#fdfdfd,#e6e6e6 45%,#cfcfcf);border-bottom:1px solid #4a4a4a"></div>
<div class="a" style="left:464px;top:116px;width:17px;height:17px;border-radius:50%;border:1px solid #777;background:linear-gradient(#f8f8f8,#d8d8d8)"></div>
<div class="a" style="left:468.5px;top:123px;width:0;height:0;border-left:4px solid transparent;border-right:4px solid transparent;border-top:4px solid #333"></div>
<div class="t" style="left:486px;top:119px;font-size:11.6px;font-weight:bold;color:#111">ADRi : Consultation des informations du patient</div>
<div class="a" style="left:1419px;top:111px;width:33px;height:20px;border:1px solid #6a6a6a;border-top:none;border-radius:0 0 7px 7px;background:linear-gradient(#fafafa,#d8d8d8)"></div>
<svg class="a" style="left:1430px;top:116px" width="11" height="11" viewBox="0 0 11 11"><path d="M1.5 1.5l8 8M9.5 1.5l-8 8" stroke="#333" stroke-width="2"/></svg>
<div class="a" style="left:456px;top:139px;width:1008px;height:98px;background:#fff"></div>
<div class="a" style="left:457px;top:139px;width:1004px;height:97px;background:#c0c0c0"></div>
<svg class="a" style="left:468px;top:145px" width="72" height="72" viewBox="0 0 72 72"><defs><path id="arc" d="M16.4 51.2 A24.5 24.5 0 0 1 47.9 17.75"/><clipPath id="cc"><circle cx="38.3" cy="40.3" r="21.5"/></clipPath><linearGradient id="yg" x1="0" y1="0" x2="0.3" y2="1"><stop offset="0" stop-color="#f4c010"/><stop offset="0.6" stop-color="#f8cc30"/><stop offset="1" stop-color="#fff4c8"/></linearGradient></defs>
<circle cx="38.3" cy="40.3" r="29" fill="#c5c5c5"/>
<g clip-path="url(#cc)"><rect x="0" y="0" width="72" height="72" fill="#1f9a3c"/><path d="M-10 81.8 L80 31 L80 80 L-10 80Z" fill="url(#yg)"/></g>
<circle cx="49.2" cy="24.4" r="2.7" fill="#c5c5c5"/>
<text x="0" y="0" font-size="18" fill="#f2cc10" text-anchor="middle" font-family="Liberation Sans" transform="translate(42 47.5) rotate(-29)" letter-spacing="-0.5">ADRI</text>
<text font-size="5.6" fill="#30a050" font-family="Liberation Sans" font-weight="bold"><textPath href="#arc" textLength="58">l'Assurance Maladie</textPath></text></svg>
<div class="t" style="left:590px;top:153px;font-size:11.5px;font-weight:bold;color:#3c1450">Nom : DESMAUX NATHALIE, né(e) le : 15/06/1955</div>
<div class="t" style="left:590px;top:170px;font-size:11.5px;font-weight:bold;color:#3c1450">NIR de l'ouvrant droit : 2550699999999, clé : 34</div>
<div class="t" style="left:590px;top:187px;font-size:11.5px;font-weight:bold;color:#3c1450">NIR du bénéficiaire : 1750163220748, clé : 46</div>
<div class="t" style="left:590px;top:203px;font-size:11.5px;font-weight:bold;color:#3c1450">Rang : 1</div>
<div class="a" style="left:480px;top:267px;width:961px;height:97px;border:1px solid #989898"></div>
<div class="a" style="left:483px;top:260px;width:73px;height:14px;background:#f0f0f0"></div>
<div class="t" style="left:485.5px;top:262px;font-size:11px;font-weight:bold">Administratif</div>
<div class="t" style="left:207px;width:400px;text-align:right;top:285px;font-size:11px;font-weight:bold"><u>N</u>om usuel</div>
<div class="t" style="left:618px;top:285px;font-size:11px;font-weight:bold">DESMAUX</div>
<div class="t" style="left:207px;width:400px;text-align:right;top:301px;font-size:11px;font-weight:bold"><u>P</u>rénom</div>
<div class="t" style="left:618px;top:301px;font-size:11px;font-weight:bold">NATHALIE</div>
<div class="t" style="left:207px;width:400px;text-align:right;top:316px;font-size:11.5px;">Né(e) <u>l</u>e</div>
<div class="t" style="left:618px;top:316px;font-size:11.5px;">15/06/1955</div>
<div class="t" style="left:845px;top:285px;font-size:11.5px;">Adresse</div>
<div class="a" style="left:480px;top:380px;width:961px;height:512px;border:1px solid #989898"></div>
<div class="a" style="left:483px;top:373px;width:103px;height:14px;background:#f0f0f0"></div>
<div class="t" style="left:485.5px;top:375px;font-size:11px;font-weight:bold">Assurance maladie</div>
<div class="t" style="left:207px;width:400px;text-align:right;top:398px;font-size:11.5px;">NIR de l'ouvrant droit</div>
<div class="t" style="left:618px;top:398px;font-size:11.5px;">2550699999999 34</div>
<div class="t" style="left:207px;width:400px;text-align:right;top:417px;font-size:11.5px;">NIR du bénéficiaire</div>
<div class="t" style="left:618px;top:417px;font-size:11.5px;">175016322074846</div>
<div class="t" style="left:484px;width:400px;text-align:right;top:398px;font-size:11.5px;">Qualité</div>
<div class="t" style="left:900px;top:398px;font-size:11.5px;">Assuré</div>
<div class="t" style="left:484px;width:400px;text-align:right;top:417px;font-size:11.5px;">Rang de naissance</div>
<div class="t" style="left:900px;top:417px;font-size:11.5px;">1</div>
<div class="t" style="left:1045.5px;top:398px;font-size:11.5px;">Le bénéficiaire n’a pas déclaré de MT ou n’est pas concerné par le MT</div>
<div class="a" style="left:494px;top:444px;width:920px;height:2px;background:linear-gradient(#a0a0a0 50%,#fff 50%)"></div>
<div class="t" style="left:494px;top:454px;font-size:11px;font-weight:bold">Assurance Maladie Obligatoire</div>
<div class="t" style="left:207px;width:400px;text-align:right;top:473px;font-size:11.5px;">Code Régime</div>
<div class="t" style="left:618px;top:473px;font-size:11.5px;">01</div>
<div class="t" style="left:484px;width:400px;text-align:right;top:473px;font-size:11.5px;">Code caisse gestionnaire</div>
<div class="t" style="left:900px;top:473px;font-size:11.5px;">349</div>
<div class="t" style="left:1045.5px;top:473px;font-size:11.5px;">Code centre gestionnaire</div>
<div class="t" style="left:1189px;top:473px;font-size:11.5px;">9881</div>
<div class="a" style="left:494px;top:494px;width:920px;height:2px;background:linear-gradient(#a0a0a0 50%,#fff 50%)"></div>
<div class="t" style="left:494px;top:506px;font-size:11px;font-weight:bold">Périodes droits couverture</div>
<div class="a" style="left:500px;top:522px;width:893px;height:101px;border:1px solid #8a949c;background:#fff"></div>
<div class="a" style="left:516px;top:524px;width:1px;height:19px;background:#d8d8d8"></div>
<div class="a" style="left:533px;top:524px;width:1px;height:19px;background:#d8d8d8"></div>
<div class="a" style="left:613px;top:524px;width:1px;height:19px;background:#d8d8d8"></div>
<div class="a" style="left:713px;top:524px;width:1px;height:19px;background:#d8d8d8"></div>
<div class="a" style="left:813px;top:524px;width:1px;height:19px;background:#d8d8d8"></div>
<div class="a" style="left:1390px;top:524px;width:1px;height:19px;background:#d8d8d8"></div>
<div class="a" style="left:517px;top:561px;width:297px;height:18px;background:#e1e5fa"></div>
<div class="a" style="left:517px;top:597px;width:297px;height:18px;background:#e1e5fa"></div>
<div class="t" style="left:473.5px;width:200px;text-align:center;top:529px;font-size:11.5px;">ALD</div>
<div class="t" style="left:618px;top:529px;font-size:11.5px;">Début</div>
<div class="t" style="left:718px;top:529px;font-size:11.5px;">Fin</div>
<div class="t" style="left:473px;width:200px;text-align:center;top:547px;font-size:11.5px;">Non ALD</div>
<div class="t" style="left:618px;top:547px;font-size:11.5px;">17/01/1970</div>
<div class="t" style="left:717px;top:547px;font-size:11.5px;">20/11/1974</div>
<div class="t" style="left:473px;width:200px;text-align:center;top:565px;font-size:11.5px;">ALD</div>
<div class="t" style="left:618px;top:565px;font-size:11.5px;">10/07/1975</div>
<div class="t" style="left:717px;top:565px;font-size:11.5px;"></div>
<div class="t" style="left:473px;width:200px;text-align:center;top:583px;font-size:11.5px;">ALD</div>
<div class="t" style="left:618px;top:583px;font-size:11.5px;"></div>
<div class="t" style="left:717px;top:583px;font-size:11.5px;">27/03/2011</div>
<div class="t" style="left:473px;width:200px;text-align:center;top:601px;font-size:11.5px;">Non ALD</div>
<div class="t" style="left:618px;top:601px;font-size:11.5px;">10/05/2015</div>
<div class="t" style="left:717px;top:601px;font-size:11.5px;">12/11/2018</div>
<div class="a" style="left:494px;top:636px;width:920px;height:2px;background:linear-gradient(#a0a0a0 50%,#fff 50%)"></div>
<div class="t" style="left:494px;top:649px;font-size:11px;font-weight:bold">Situation particulière</div>
<div class="t" style="left:496px;top:673px;font-size:11.5px;">01 : CMU-C gérée par la caisse</div>
<div class="t" style="left:622px;width:400px;text-align:right;top:673px;font-size:11.5px;">Date de début</div>
<div class="t" style="left:1029.5px;top:673px;font-size:11.5px;">13/11/2017</div>
<div class="t" style="left:833px;width:400px;text-align:right;top:673px;font-size:11.5px;">Date de fin</div>
<div class="t" style="left:1243.5px;top:673px;font-size:11.5px;">12/11/2018</div>
<div class="a" style="left:494px;top:691px;width:920px;height:2px;background:linear-gradient(#a0a0a0 50%,#fff 50%)"></div>
<div class="t" style="left:494px;top:700px;font-size:11px;font-weight:bold">Organisme complémentaire</div>
<div class="t" style="left:496px;top:720px;font-size:11.5px;">99999997 CMU-C gérée par la caisse</div>
<div class="t" style="left:622px;width:400px;text-align:right;top:720px;font-size:11.5px;">Date de début des droits en gestion unique</div>
<div class="t" style="left:1029.5px;top:720px;font-size:11.5px;">13/11/2017</div>
<div class="t" style="left:833px;width:400px;text-align:right;top:720px;font-size:11.5px;">Date de fin</div>
<div class="t" style="left:1243.5px;top:720px;font-size:11.5px;">12/11/2018</div>
<div class="a" style="left:494px;top:740px;width:920px;height:2px;background:linear-gradient(#a0a0a0 50%,#fff 50%)"></div>
<div class="t" style="left:496px;top:750px;font-size:11px;font-weight:bold">Accidents de travail</div>
<div class="a" style="left:500px;top:768px;width:893px;height:100px;border:1px solid #8a949c;background:#fff"></div>
<div class="a" style="left:516px;top:770px;width:1px;height:19px;background:#d8d8d8"></div>
<div class="a" style="left:533px;top:770px;width:1px;height:19px;background:#d8d8d8"></div>
<div class="a" style="left:633px;top:770px;width:1px;height:19px;background:#d8d8d8"></div>
<div class="a" style="left:709px;top:770px;width:1px;height:19px;background:#d8d8d8"></div>
<div class="a" style="left:787px;top:770px;width:1px;height:19px;background:#d8d8d8"></div>
<div class="a" style="left:879px;top:770px;width:1px;height:19px;background:#d8d8d8"></div>
<div class="a" style="left:1390px;top:770px;width:1px;height:19px;background:#d8d8d8"></div>
<div class="a" style="left:517px;top:807px;width:363px;height:18px;background:#e1e5fa"></div>
<div class="t" style="left:550.5px;top:775px;font-size:11.5px;">Identifiant AT</div>
<div class="t" style="left:638.5px;top:775px;font-size:11.5px;">Code régime</div>
<div class="t" style="left:714.5px;top:775px;font-size:11.5px;">Code Caisse</div>
<div class="t" style="left:792px;top:775px;font-size:11.5px;">Code Centre</div>
<div class="t" style="left:556px;top:793px;font-size:11.5px;">890512346</div>
<div class="t" style="left:636.5px;top:793px;font-size:11.5px;">01</div>
<div class="t" style="left:713px;top:793px;font-size:11.5px;">261</div>
<div class="t" style="left:790.5px;top:793px;font-size:11.5px;">9880</div>
<div class="t" style="left:556px;top:811px;font-size:11.5px;">892512344</div>
<div class="t" style="left:636.5px;top:811px;font-size:11.5px;">01</div>
<div class="t" style="left:713px;top:811px;font-size:11.5px;">261</div>
<div class="t" style="left:790.5px;top:811px;font-size:11.5px;">9880</div>
<div class="a btn" style="left:885px;top:895px;width:128px;height:30px;border-color:#8a8a8a;border-radius:3px"></div>
<div class="t" style="left:849px;width:200px;text-align:center;top:905px;font-size:11.5px;"><u>Q</u>uitter</div>
<!--/DIALOG-->
<div id="taskbar" class="a"></div>
<!--TASKBAR-->
<div class="a" style="left:784px;top:1040px;width:48px;height:40px;background:#3d3a88"></div>
<div class="a" style="left:151px;top:1078px;width:40px;height:2px;background:#a6a6f2"></div>
<div class="a" style="left:200px;top:1078px;width:40px;height:2px;background:#a6a6f2"></div>
<div class="a" style="left:445px;top:1078px;width:31px;height:2px;background:#a6a6f2"></div>
<div class="a" style="left:494px;top:1078px;width:40px;height:2px;background:#a6a6f2"></div>
<div class="a" style="left:592px;top:1078px;width:40px;height:2px;background:#a6a6f2"></div>
<div class="a" style="left:641px;top:1078px;width:40px;height:2px;background:#a6a6f2"></div>
<div class="a" style="left:690px;top:1078px;width:40px;height:2px;background:#a6a6f2"></div>
<div class="a" style="left:739px;top:1078px;width:31px;height:2px;background:#a6a6f2"></div>
<div class="a" style="left:784px;top:1078px;width:48px;height:2px;background:#a6a6f2"></div>
<div class="a" style="left:476px;top:1078px;width:9px;height:2px;background:#6a6a9a"></div><div class="a" style="left:770px;top:1078px;width:9px;height:2px;background:#6a6a9a"></div>
<svg class="a" style="left:15.5px;top:1051.5px" width="17" height="17" viewBox="0 0 17 17"><path d="M0 2.4L7 1.4V8H0zM8 1.3L17 0V8H8zM0 9H7V15.6L0 14.6zM8 9H17V17L8 15.7z" fill="#fff"/></svg>
<svg class="a" style="left:63.5px;top:1051.5px" width="17" height="17" viewBox="0 0 17 17"><circle cx="10.5" cy="6" r="5" fill="none" stroke="#fff" stroke-width="1.3"/><path d="M7 9.5L1 15.5" stroke="#fff" stroke-width="1.4"/></svg>
<svg class="a" style="left:109.5px;top:1052.5px" width="21" height="15" viewBox="0 0 21 15"><rect x="4.5" y="1" width="12" height="13" fill="none" stroke="#fff" stroke-width="1.3"/><path d="M2 3.5v8M19 3.5v8" stroke="#fff" stroke-width="1.2"/></svg>
<svg class="a" style="left:159.0px;top:1048.0px" width="24" height="24" viewBox="0 0 24 24"><circle cx="12" cy="12" r="11.3" fill="#db4437"/><path d="M12 12 L2.2 17.6 A11.3 11.3 0 0 0 12 23.3Z" fill="#0f9d58"/><path d="M12 12 L2.2 17.6 A11.3 11.3 0 0 1 1.5 8 L12 6.5Z" fill="#0f9d58"/><path d="M12 12 L12 23.3 A11.3 11.3 0 0 0 23.3 12 L19 6.5Z" fill="#f4c20d"/><circle cx="12" cy="12" r="5" fill="#fff"/><circle cx="12" cy="12" r="3.8" fill="#4285f4"/></svg>
<svg class="a" style="left:209.0px;top:1049.0px" width="22" height="22" viewBox="0 0 22 22"><path d="M0 3h8l2 2h12v16H0z" fill="#f0d070"/><path d="M0 7h22v14H0z" fill="#f8e090"/><path d="M4 14h14v7h-3v-4H7v4H4z" fill="#2a9ae0"/></svg>
<svg class="a" style="left:257.0px;top:1048.0px" width="24" height="24" viewBox="0 0 24 24"><defs><radialGradient id="ffg" cx="0.7" cy="0.2" r="0.9"><stop offset="0" stop-color="#ffd030"/><stop offset="0.45" stop-color="#ff8a20"/><stop offset="1" stop-color="#e8302a"/></radialGradient></defs><circle cx="12" cy="12.5" r="10.5" fill="url(#ffg)"/><circle cx="13" cy="11" r="5.5" fill="#2a5ad8"/><path d="M7 9 Q9 15 15 15.5 Q11 17 8 14.5z" fill="#ff7a20"/><path d="M15 1.5 Q22 4 22.5 11 Q21 6 16 5z" fill="#ffe040"/></svg>
<svg class="a" style="left:306.0px;top:1048.0px" width="24" height="24" viewBox="0 0 24 24"><text x="12.5" y="21" font-size="27" font-weight="bold" fill="#38c0f4" text-anchor="middle" font-family="Liberation Sans">e</text><path d="M3 21 Q-1 16 9 8 Q19 1 22 2 Q25 4 18 11" stroke="#f0b820" stroke-width="1.8" fill="none"/></svg>
<svg class="a" style="left:354.0px;top:1048.0px" width="24" height="24" viewBox="0 0 24 24"><circle cx="11" cy="12" r="10" fill="#4070b8"/><path d="M3 9 Q8 5 12 8 Q10 13 5 13z M10 16 Q14 14 16 18 Q12 21 10 19z" fill="#a0c0d8"/><path d="M15 2 Q25 7 21 19 Q18 22 14 22 Q19 14 15 2z" fill="#f4d020"/><path d="M14 22 L20 8" stroke="#c08020" stroke-width="0.7"/></svg>
<svg class="a" style="left:403.0px;top:1048.0px" width="24" height="24" viewBox="0 0 24 24"><path d="M1 7V1h6l-2 2 3 3-2 2-3-3z" fill="#2a80f0"/><rect x="5" y="11" width="13" height="10" rx="1" fill="#7a7a7a"/><rect x="5" y="11" width="13" height="4" fill="#9a9a9a"/><path d="M7.5 11V7.5a4 4 0 0 1 8 0V11" stroke="#a8a8a8" stroke-width="2.2" fill="none"/><path d="M23 17v6h-6l2-2-3-3 2-2 3 3z" fill="#20c020"/></svg>
<svg class="a" style="left:453.0px;top:1048.0px" width="24" height="24" viewBox="0 0 24 24"><rect x="10" y="5" width="13" height="13" fill="#fff"/><path d="M10 6l6.5 5 6.5-5" stroke="#0a64c0" stroke-width="1.2" fill="none"/><path d="M0 3L13 1v22L0 21z" fill="#0a6ad0"/><text x="6.5" y="16.5" font-size="11" font-weight="bold" fill="#fff" text-anchor="middle" font-family="Liberation Sans">O</text></svg>
<svg class="a" style="left:502.0px;top:1048.0px" width="24" height="24" viewBox="0 0 24 24"><circle cx="11" cy="11" r="10" fill="#2aaaf0"/><circle cx="11" cy="11" r="7.5" fill="#fff" opacity="0.2"/><text x="11" y="16" font-size="14" font-weight="bold" fill="#fff" text-anchor="middle" font-family="Liberation Sans">S</text><circle cx="19" cy="19" r="5" fill="#fff"/><circle cx="19" cy="19" r="4" fill="#6ab030"/><path d="M17 19l1.5 1.5 3-3" stroke="#fff" stroke-width="1.2" fill="none"/></svg>
<svg class="a" style="left:551.0px;top:1048.0px" width="24" height="24" viewBox="0 0 24 24"><rect x="11" y="3" width="12" height="18" fill="#fff" stroke="#1e7040" stroke-width="1"/><path d="M11 7h12M11 11h12M11 15h12M17 3v18" stroke="#1e7040" stroke-width="0.8"/><path d="M0 3L13 1v22L0 21z" fill="#1e7040"/><text x="6.5" y="16.5" font-size="11" font-weight="bold" fill="#fff" text-anchor="middle" font-family="Liberation Sans">X</text></svg>
<svg class="a" style="left:600.0px;top:1048.0px" width="24" height="24" viewBox="0 0 24 24"><rect x="0" y="0" width="24" height="24" rx="5" fill="#1ab0f8"/><path d="M3 17 L9 7 L13 13 L16 7 L21 17" stroke="#fff" stroke-width="2" fill="none"/><path d="M3 17h18" stroke="#fff" stroke-width="1"/></svg>
<svg class="a" style="left:649.0px;top:1048.0px" width="24" height="24" viewBox="0 0 24 24"><rect x="0" y="0" width="24" height="24" rx="2" fill="#1a2028"/><path d="M9 13 Q7 4 14 3 Q19 5 15 9 L10 11" stroke="#30d050" stroke-width="1.8" fill="none"/><path d="M7 17l5 4 5-4" stroke="#fff" stroke-width="1.8" fill="none"/></svg>
<svg class="a" style="left:698.0px;top:1048.0px" width="24" height="24" viewBox="0 0 24 24"><rect x="11" y="4" width="12" height="16" fill="#fff" stroke="#d24726" stroke-width="1"/><path d="M14 8h6v5h-6z" fill="#d24726"/><path d="M0 3L13 1v22L0 21z" fill="#d24726"/><text x="6.5" y="16.5" font-size="11" font-weight="bold" fill="#fff" text-anchor="middle" font-family="Liberation Sans">P</text></svg>
<svg class="a" style="left:747.0px;top:1048.0px" width="24" height="24" viewBox="0 0 24 24"><path d="M2 14 Q0 4 11 3 Q20 3 19 10 Q14 11 15 15 Q14 21 8 21 Q3 20 2 14z" fill="#c8d8e8"/><circle cx="6" cy="10" r="1.8" fill="#e04040"/><circle cx="10" cy="7" r="1.8" fill="#40a040"/><circle cx="14" cy="7" r="1.8" fill="#f0c020"/><circle cx="8" cy="15" r="1.5" fill="#333"/><path d="M12 22L22 3" stroke="#f0a030" stroke-width="2"/><path d="M20 2l3-1-1 4z" fill="#d8a060"/></svg>
<div class="a" style="left:797px;top:1048px;width:24px;height:25px;background:#f4f4f4;border-radius:2px"><svg width="24" height="25" viewBox="0 0 24 25"><text x="12" y="8" font-size="8" fill="#3a8ee0" text-anchor="middle" font-family="Liberation Sans" textLength="19">CLM</text><rect x="3" y="9" width="8" height="7" fill="#bdbdbd"/><rect x="3" y="17" width="8" height="7" fill="#3a8ee0"/><rect x="12.5" y="17" width="8" height="7" fill="#777"/><path d="M13 10l2 2M15 13h3M17 10l2 2M16 15h4" stroke="#3a8ee0" stroke-width="0.8"/></svg></div>
<svg class="a" style="left:1683px;top:1055px" width="13" height="8" viewBox="0 0 13 8"><path d="M1 7l5.5-5.5L12 7" stroke="#fff" stroke-width="1.3" fill="none"/></svg>
<div class="a" style="left:1705px;top:1053px;width:16px;height:13px;background:#f03a10"><div class="a" style="left:2px;top:2px;width:12px;height:9px;background:repeating-linear-gradient(#f0c020 0 2px,#c89010 2px 3px)"></div></div>
<svg class="a" style="left:1729px;top:1055px" width="17" height="11" viewBox="0 0 17 11"><rect x="0.6" y="0.6" width="13.5" height="9.5" fill="none" stroke="#fff" stroke-width="1.2"/><rect x="2.5" y="2.5" width="7" height="5.8" fill="#fff"/><rect x="14.5" y="3.5" width="1.8" height="3.8" fill="#fff"/></svg>
<div class="a" style="left:1753px;top:1052px;width:16px;height:16px;background:#eee;border-radius:2px"><svg width="16" height="16" viewBox="0 0 16 16"><rect x="1" y="1" width="7" height="7" fill="#aaa"/><rect x="1" y="8" width="7" height="7" fill="#3a8ee0"/><rect x="8" y="8" width="7" height="7" fill="#777"/><path d="M10 3l2 2M12 2l2 2" stroke="#8ac0f0" stroke-width="0.8"/></svg></div>
<svg class="a" style="left:1780px;top:1054px" width="13" height="13" viewBox="0 0 13 13"><path d="M1 12 A11 11 0 0 1 12 1M4 12 A8 8 0 0 1 12 4M7 12 A5 5 0 0 1 12 7" stroke="#9a9ab0" stroke-width="1" fill="none"/><circle cx="10.5" cy="10.5" r="1.5" fill="#fff"/></svg>
<div class="t" style="left:1800px;width:64px;text-align:center;top:1044.5px;font-size:12px;color:#fff">09:44</div>
<div class="t" style="left:1800px;width:64px;text-align:center;top:1062.3px;font-size:12px;color:#fff">21/05/2019</div>
<svg class="a" style="left:1878px;top:1052px" width="18" height="17" viewBox="0 0 18 17"><path d="M1 1h16v12h-5l-4 3-1-3H1z" fill="none" stroke="#fff" stroke-width="1.2"/><circle cx="14" cy="13" r="2.5" fill="#1c1a42" stroke="#fff" stroke-width="1"/></svg>
<div class="a" style="left:1915px;top:1040px;width:1px;height:40px;background:#5a5a7a"></div>
<!--/TASKBAR-->
</body></html>
